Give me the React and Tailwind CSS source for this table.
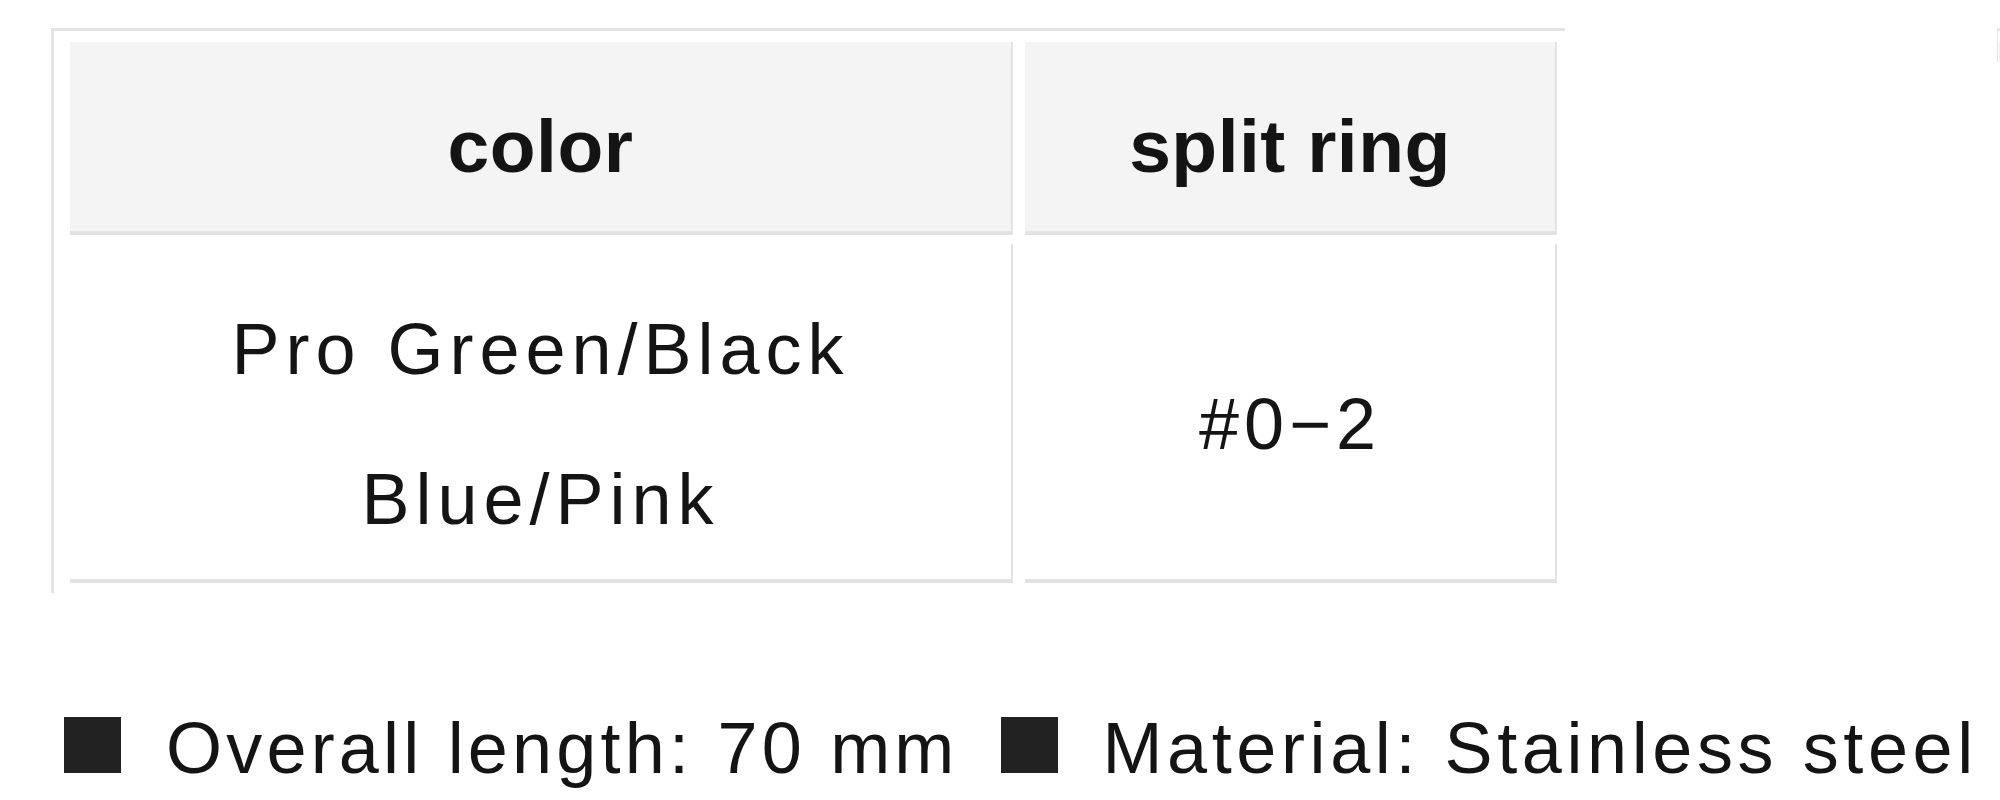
import React from 'react';

const specs = [
  { label: 'Overall length: 70 mm', track: 'tracking-[4.2px]' },
  { label: 'Material: Stainless steel', track: 'tracking-[4.6px]' },
];

const cellBase = 'flex flex-col items-center justify-center border-r-2 border-b-4 border-[#e3e3e3]';

const App = () => {
  return (
    <div className="w-[2000px] h-[800px] overflow-hidden bg-white text-[#141414] font-['Liberation_Sans',Arial,sans-serif]">
      <div className="flex items-start">
        <div className="ml-[51px] mt-[28px] w-[1514px] shrink-0 border-t-[3px] border-l-[3px] border-[#e4e4e4] pl-[16px] pt-[11px] pr-[8px] pb-[10px]">
          <div className="grid grid-cols-[943px_532px] gap-x-[12px] gap-y-[9px]">
            <div className={`${cellBase} h-[193px] pt-[19px] bg-[#f4f4f4]`}>
              <span className="text-[75px] font-bold leading-none tracking-[0.5px]">color</span>
            </div>
            <div className={`${cellBase} h-[193px] pt-[19px] bg-[#f4f4f4]`}>
              <span className="text-[75px] font-bold leading-none tracking-[0.5px]">split ring</span>
            </div>
            <div className={`${cellBase} h-[339px] pt-[24px] bg-white`}>
              <span className="text-[72px] leading-[150px] tracking-[6px]">Pro Green/Black</span>
              <span className="text-[72px] leading-[150px] tracking-[6px]">Blue/Pink</span>
            </div>
            <div className={`${cellBase} h-[339px] pt-[24px] bg-white`}>
              <span className="text-[72px] leading-[150px] tracking-[5px]">#0−2</span>
            </div>
          </div>
        </div>
        {/* next table, cut off at the window edge */}
        <div className="ml-[432px] mt-[28px] w-[40px] shrink-0 border-t-[3px] border-l-[1px] border-[#e4e4e4] pl-[1px] pt-[11px]">
          <div className="h-[20px] bg-[#f0f0f0]" />
        </div>
      </div>

      <div className="mt-[115px] pl-[64px] flex items-baseline text-[72px] leading-[80px] whitespace-nowrap">
        {specs.map((s, i) => (
          <React.Fragment key={i}>
            <span className={`inline-block w-[57px] h-[56px] bg-[#222] mr-[45px] ${i > 0 ? 'ml-[42px]' : ''}`} />
            <span className={s.track}>{s.label}</span>
          </React.Fragment>
        ))}
      </div>
    </div>
  );
};

export default App;
